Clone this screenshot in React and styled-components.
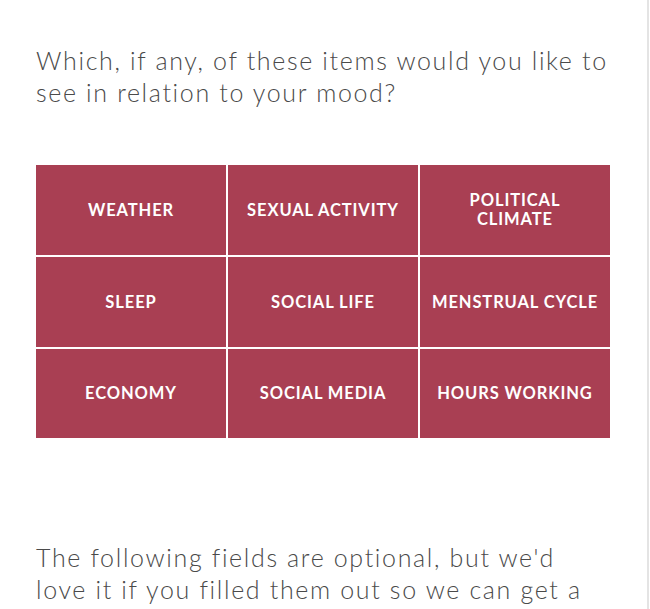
import React from "react"
import styled, { createGlobalStyle } from "styled-components"

const Global = createGlobalStyle`
  html, body {
    margin: 0;
    padding: 0;
    background: #fff;
    overflow: hidden;
  }
`

const Page = styled.div`
  height: 609px;
  width: 649px;
  box-sizing: border-box;
  border-right: 2px solid #e4e4e4;
  padding: 44px 0 0 36px;
`

const Question = styled.p`
  margin: 0;
  width: 576px;
  font-family: "Lato", "Open Sans", sans-serif;
  font-weight: 300;
  font-size: 25px;
  line-height: 32px;
  letter-spacing: 1.65px;
  color: #4a4a4a;
`

const Grid = styled.div`
  margin-top: 57px;
  width: 574px;
  display: grid;
  grid-template-columns: repeat(3, 190px);
  grid-template-rows: 90px 90px 89px;
  gap: 2px;
`

const Cell = styled.div`
  background: #a93f53;
  color: #fff;
  display: flex;
  align-items: center;
  justify-content: center;
  text-align: center;
  padding: 0 3px;
  font-family: "Lato", "Open Sans", sans-serif;
  font-weight: 700;
  font-size: 16.5px;
  line-height: 19px;
  letter-spacing: 0.9px;
  text-transform: uppercase;
  box-sizing: border-box;
`

const Footnote = styled(Question)`
  margin-top: 103px;
`

const items = [
  "Weather", "Sexual Activity", "Political Climate",
  "Sleep", "Social Life", "Menstrual Cycle",
  "Economy", "Social Media", "Hours Working",
]

export default function App() {
  return (
    <>
      <Global />
      <Page>
        <Question>Which, if any, of these items would you like to see in relation to your mood?</Question>
        <Grid>
          {items.map(label => (
            <Cell key={label}>{label === "Political Climate" ? <span>Political<br />Climate</span> : label}</Cell>
          ))}
        </Grid>
        <Footnote>The following fields are optional, but we'd love it if you filled them out so we can get a</Footnote>
      </Page>
    </>
  )
}
